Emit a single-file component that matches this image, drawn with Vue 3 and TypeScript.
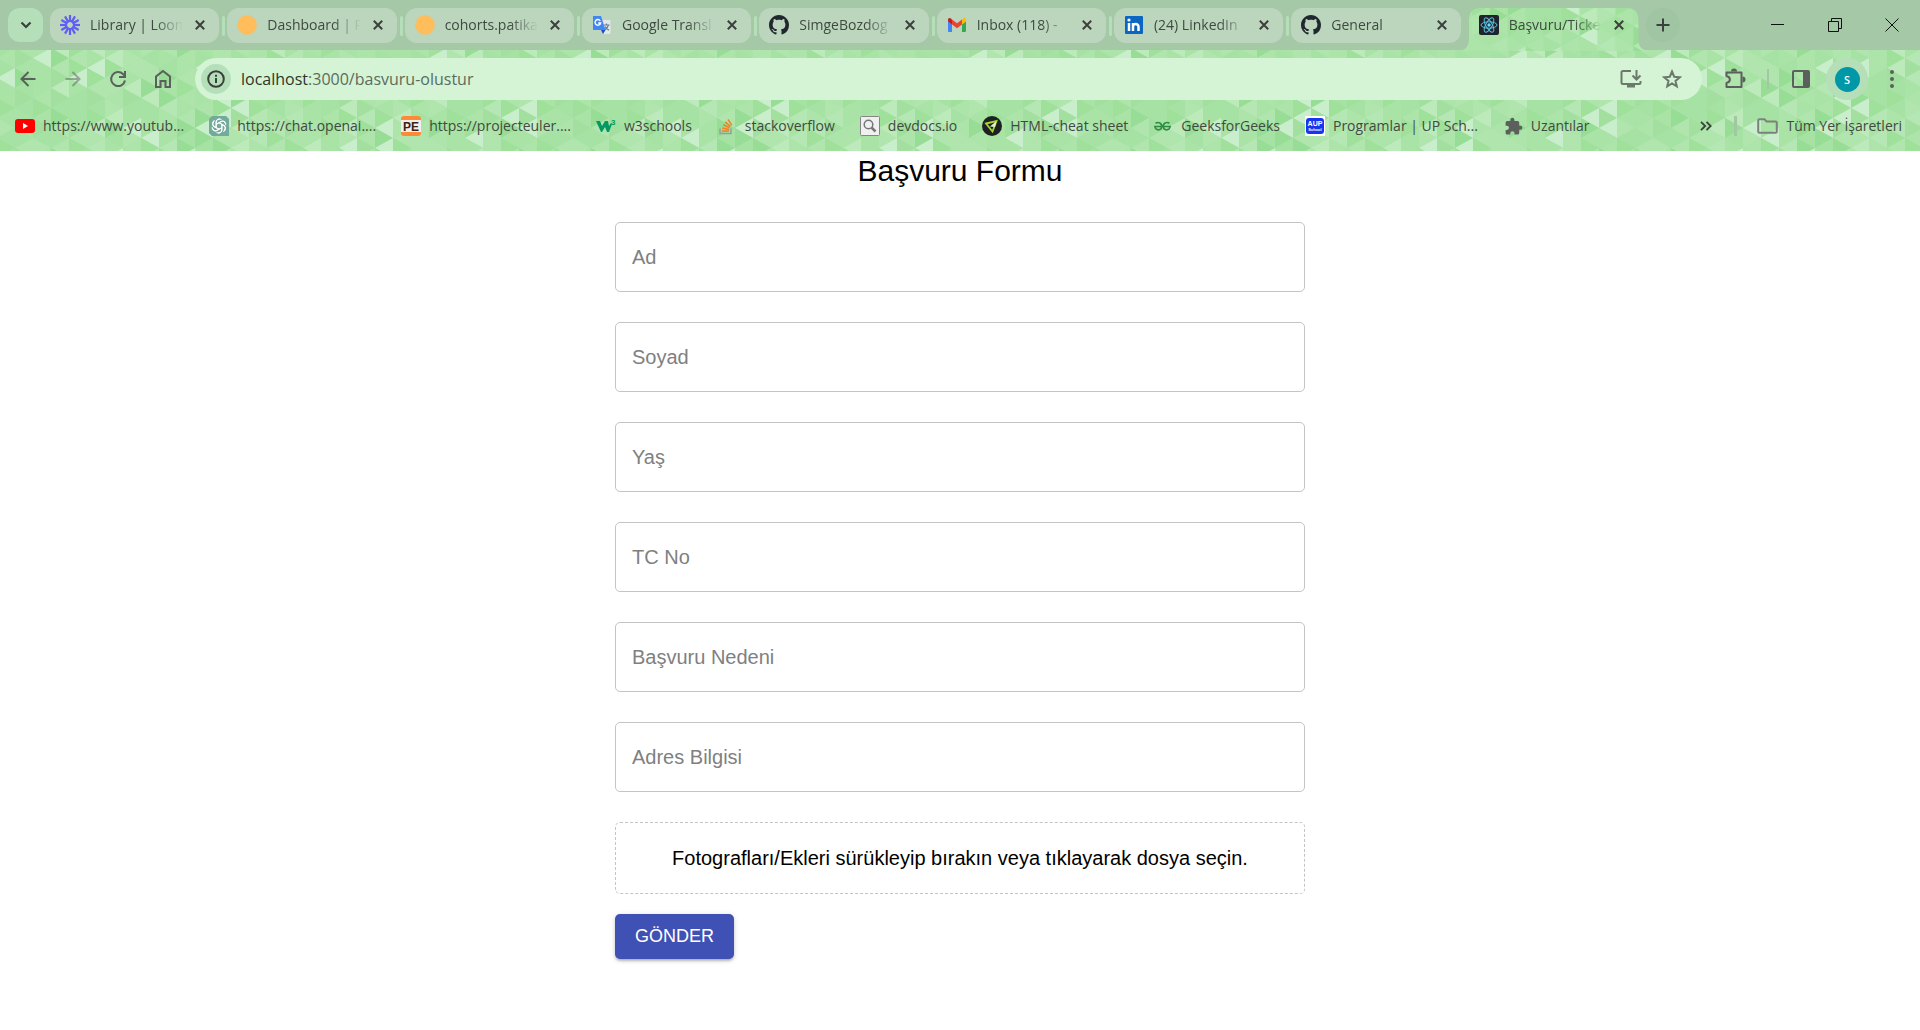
<script setup lang="ts">
import { ref } from 'vue'

interface Tab { icon: string; title: string; active?: boolean }
interface Bookmark { icon: string; title: string }
interface Field { id: string; label: string }

const tabs: Tab[] = [
  { icon: 'loom', title: 'Library | Loom' },
  { icon: 'sun', title: 'Dashboard | P' },
  { icon: 'sun', title: 'cohorts.patika' },
  { icon: 'translate', title: 'Google Transl' },
  { icon: 'github', title: 'SimgeBozdog' },
  { icon: 'gmail', title: 'Inbox (118) -' },
  { icon: 'linkedin', title: '(24) LinkedIn' },
  { icon: 'github', title: 'General' },
  { icon: 'react', title: 'Başvuru/Ticke', active: true },
]

const bookmarks: Bookmark[] = [
  { icon: 'youtube', title: 'https://www.youtub...' },
  { icon: 'openai', title: 'https://chat.openai....' },
  { icon: 'euler', title: 'https://projecteuler....' },
  { icon: 'w3', title: 'w3schools' },
  { icon: 'stack', title: 'stackoverflow' },
  { icon: 'devdocs', title: 'devdocs.io' },
  { icon: 'cheat', title: 'HTML-cheat sheet' },
  { icon: 'geeks', title: 'GeeksforGeeks' },
  { icon: 'aup', title: 'Programlar | UP Sch...' },
  { icon: 'puzzle', title: 'Uzantılar' },
]

const fields: Field[] = [
  { id: 'ad', label: 'Ad' },
  { id: 'soyad', label: 'Soyad' },
  { id: 'yas', label: 'Yaş' },
  { id: 'tc', label: 'TC No' },
  { id: 'neden', label: 'Başvuru Nedeni' },
  { id: 'adres', label: 'Adres Bilgisi' },
]

const url = ref('localhost:3000/basvuru-olustur')
const values = ref<Record<string, string>>({})

// Theme background: a repeating tile of triangles in columns, shaded by a seeded generator.
const COL = 18
const ROW = 20
const COLS = 30
const ROWS = 8
const shades = ['#98dd95', '#9fe09b', '#a3e09f', '#a6e2a3', '#a9e3a6', '#ace4aa', '#b0e5ae', '#b5e7b4', '#bceaba', '#c9eecb']
let seed = 4177
function rand(): number {
  seed = (seed * 1103515245 + 12345) % 2147483648
  return seed / 2147483648
}
const triangles: { points: string; fill: string }[] = []
for (let c = 0; c < COLS; c++) {
  const x = c * COL
  const shift = c % 2 ? ROW / 2 : 0
  for (let r = 0; r < ROWS; r++) {
    const y = r * ROW + shift
    const rightFill = shades[Math.floor(rand() * 7)]
    const leftFill = shades[3 + Math.floor(rand() * 7)]
    for (const top of [y, y - ROWS * ROW]) {
      triangles.push({ points: `${x},${top} ${x + COL},${top + 10} ${x},${top + 20}`, fill: rightFill })
      triangles.push({ points: `${x + COL},${top + 10} ${x + COL},${top + 30} ${x},${top + 20}`, fill: leftFill })
    }
  }
}
const rays = Array.from({ length: 12 }, (_, i) => i * 30)
</script>

<template>
  <div class="window">
    <header class="chrome">
      <svg class="mesh" aria-hidden="true">
        <defs>
          <pattern id="mesh" x="15" y="48" :width="COL * COLS" :height="ROW * ROWS" patternUnits="userSpaceOnUse">
            <rect :width="COL * COLS" :height="ROW * ROWS" fill="#a8e3a5" />
            <polygon v-for="(t, i) in triangles" :key="i" :points="t.points" :fill="t.fill" />
          </pattern>
        </defs>
        <rect width="100%" height="100%" fill="url(#mesh)" />
      </svg>

      <div class="strip">
        <button class="tab-search" aria-label="Sekmelerde ara">
          <svg width="12" height="8" viewBox="0 0 12 8"><path d="M1.5 1.5 6 6l4.500-4.500" class="line" stroke-width="2.200" /></svg>
        </button>
        <div class="tabs" role="tablist">
          <div v-for="(tab, i) in tabs" :key="i" class="tab" :class="{ active: tab.active }" role="tab" :aria-selected="!!tab.active">
            <svg v-if="tab.active" class="tab-shape" viewBox="0 0 194 43" preserveAspectRatio="none" aria-hidden="true">
              <path d="M0 43C8 43 12 39 12 31V12C12 4 16 0 24 0H170C178 0 182 4 182 12V31C182 39 186 43 194 43Z" fill="url(#mesh)" />
            </svg>
            <svg class="favicon" viewBox="0 0 20 20" aria-hidden="true">
              <g v-if="tab.icon === 'loom'" stroke="#625df5" stroke-width="2.200" fill="none">
                <path v-for="a in rays" :key="a" d="M10 0V7" :transform="`rotate(${a} 10 10)`" />
                <circle cx="10" cy="10" r="4" />
              </g>
              <g v-else-if="tab.icon === 'sun'">
                <circle cx="10" cy="10" r="9.400" fill="#ffbd5b" />
                <circle cx="10" cy="10" r="9.500" fill="none" stroke="#ffbd5b" stroke-width="1" stroke-dasharray="2 1.500" />
              </g>
              <g v-else-if="tab.icon === 'translate'">
                <path d="M8 5h9.500a1 1 0 0 1 1 1v12a1 1 0 0 1-1 1H12z" fill="#e4e6e8" />
                <path d="M11.500 10h6M14.500 8.500V10M16.500 10c-.8 2.500-2.500 4-4 5M13 11.500c.8 1.600 2.500 3 4 3.600" fill="none" stroke="#68808e" stroke-width="1.200" />
                <path d="M1 1h8l4.500 14H1.800A.8.8 0 0 1 1 14.200z" fill="#4285f4" />
                <path d="M9 15h4.500L11 19z" fill="#1a4fc4" />
                <path d="M8.200 5.800A2.800 2.800 0 1 0 8.600 8H6.200" fill="none" stroke="#fff" stroke-width="1.400" />
              </g>
              <path v-else-if="tab.icon === 'github'" transform="scale(1.250)" fill="#20282e" d="M8 0C3.580 0 0 3.580 0 8c0 3.540 2.290 6.530 5.470 7.590.4.070.55-.17.55-.38 0-.19-.01-.82-.01-1.490-2.010.37-2.530-.49-2.690-.94-.09-.23-.48-.94-.82-1.130-.28-.15-.68-.52-.01-.53.63-.01 1.080.58 1.230.82.72 1.210 1.870.87 2.330.66.07-.52.28-.87.51-1.070-1.780-.2-3.640-.89-3.640-3.950 0-.87.31-1.590.82-2.150-.08-.2-.36-1.020.08-2.120 0 0 .67-.21 2.200.82.64-.18 1.320-.27 2-.27s1.360.09 2 .27c1.530-1.040 2.200-.82 2.200-.82.44 1.100.16 1.920.08 2.120.51.56.82 1.270.82 2.150 0 3.070-1.870 3.750-3.650 3.950.29.25.54.73.54 1.480 0 1.070-.01 1.930-.01 2.200 0 .21.15.46.55.38A8.010 8.010 0 0 0 16 8c0-4.420-3.580-8-8-8z" />
              <g v-else-if="tab.icon === 'gmail'">
                <path d="M1 6v9.500A1.200 1.200 0 0 0 2.200 17H5V9z" fill="#4285f4" />
                <path d="M15 9v8h2.800a1.200 1.200 0 0 0 1.200-1.200V6z" fill="#34a853" />
                <path d="M15 4.500V9.500L19 6.500V4.800c0-1.900-1.800-2.300-3-1.300z" fill="#fbbc04" />
                <path d="M5 4.500 10 8.300l5-3.800v5L10 13.300 5 9.500z" fill="#ea4335" />
                <path d="M1 4.800v1.700l4 3v-5L4 3.500c-1.200-1-3-.6-3 1.300z" fill="#c5221f" />
              </g>
              <g v-else-if="tab.icon === 'linkedin'">
                <rect x="1" y="1" width="18" height="18" rx="1" fill="#0a66c2" />
                <path d="M5 8v8M9 16V8M9 16v-4.500c0-3 5.500-3.500 5.500.2V16" fill="none" stroke="#fff" stroke-width="2.500" />
                <circle cx="5" cy="5" r="1.600" fill="#fff" />
              </g>
              <g v-else>
                <rect width="20" height="20" rx="2" fill="#20232a" />
                <g fill="none" stroke="#57c4e0" stroke-width="1">
                  <ellipse cx="10" cy="10" rx="8" ry="3.200" />
                  <ellipse cx="10" cy="10" rx="8" ry="3.200" transform="rotate(60 10 10)" />
                  <ellipse cx="10" cy="10" rx="8" ry="3.200" transform="rotate(120 10 10)" />
                </g>
                <circle cx="10" cy="10" r="1.700" fill="#61dafb" />
              </g>
            </svg>
            <span class="tab-title">{{ tab.title }}</span>
            <button class="tab-close" aria-label="Kapat">
              <svg width="10" height="10" viewBox="0 0 10 10"><path d="M.8.8 9.200 9.200M9.200.8.8 9.200" class="line" stroke-width="2" /></svg>
            </button>
          </div>
        </div>
        <button class="new-tab" aria-label="Yeni sekme">
          <svg width="14" height="14" viewBox="0 0 14 14"><path d="M7 .5v13M.5 7h13" class="line" stroke-width="2" /></svg>
        </button>
        <div class="controls">
          <button aria-label="Simge durumuna küçült"><svg width="14" height="14" viewBox="0 0 14 14"><path d="M0 6.500h13" class="thin" /></svg></button>
          <button aria-label="Önceki boyut"><svg width="14" height="14" viewBox="0 0 14 14"><path d="M.5 3.500h10v10H.5zM3.500 3V.5h10v10H11" class="thin" /></svg></button>
          <button aria-label="Pencereyi kapat"><svg width="14" height="14" viewBox="0 0 14 14"><path d="M.5.5l13 13M13.500.5l-13 13" class="thin" /></svg></button>
        </div>
      </div>

      <nav class="toolbar">
        <div class="nav-buttons">
          <button aria-label="Geri"><svg width="16" height="16" viewBox="0 0 16 16"><path d="M15.500 8H2M8.500 1 1.500 8l7 7" class="line soft" /></svg></button>
          <button aria-label="İleri" class="faded"><svg width="16" height="16" viewBox="0 0 16 16"><path d="M.5 8H14M7.500 1l7 7-7 7" class="line soft" /></svg></button>
          <button aria-label="Yenile"><svg width="18" height="18" viewBox="0 0 18 18"><path d="M16 10.500A7 7 0 1 1 14.200 4.200L16 6" class="line soft" /><path d="M16 1v6h-6" class="line soft" /></svg></button>
          <button aria-label="Ana sayfa"><svg width="18" height="20" viewBox="0 0 18 20"><path d="M2 18V7.500L9 2l7 5.500V18h-4.500v-6h-5v6z" class="line soft" /></svg></button>
        </div>
        <div class="omnibox">
          <button class="site-info" aria-label="Site bilgileri">
            <svg width="18" height="18" viewBox="0 0 18 18"><circle cx="9" cy="9" r="7.800" class="line" stroke-width="2" /><path d="M9 8v5M9 4.800v2" class="line" stroke-width="2" /></svg>
          </button>
          <div class="url">
            <input v-model="url" aria-label="Adres" />
            <span class="url-view" aria-hidden="true"><b>localhost</b>:3000/basvuru-olustur</span>
          </div>
          <button aria-label="Uygulamayı yükle">
            <svg width="22" height="20" viewBox="0 0 22 20"><path d="M11 2H3Q1.500 2 1.500 3.500v10Q1.500 15 3 15h16q1.500 0 1.500-1.500V12M16.500 1v9M12.500 6.500l4 4 4-4" class="line mid" /><path d="M7 16h8v2.500H7z" fill="#6b786c" /></svg>
          </button>
          <button aria-label="Yer işareti ekle">
            <svg width="20" height="20" viewBox="0 0 20 20"><path d="M10 2.500l2.200 5.200 5.600.5-4.300 3.700 1.300 5.500-4.800-2.900-4.800 2.900 1.300-5.500L2.200 8.200l5.600-.5z" class="line mid" /></svg>
          </button>
        </div>
        <div class="actions">
          <button aria-label="Uzantılar">
            <svg width="22" height="22" viewBox="0 0 22 22"><path d="M2.500 4.500h15v14.500h-15v-4c4.500-1 4.500-6 0-7z" class="line soft" stroke-linejoin="round" /><path d="M7 3.500a3 3 0 0 1 6 0zM18.500 8.500a3 3 0 0 1 0 6z" fill="#5c605c" /></svg>
          </button>
          <span class="bar thin-bar"></span>
          <button aria-label="Yan panel">
            <svg width="18" height="18" viewBox="0 0 18 18"><rect x="1" y="1" width="16" height="16" rx="1" class="line soft" /><path d="M11 1h6v16h-6z" fill="#5c605c" /></svg>
          </button>
          <button class="profile" aria-label="Profil"><span>S</span></button>
          <button aria-label="Menü">
            <svg width="6" height="20" viewBox="0 0 6 20" fill="#5c605c"><circle cx="3" cy="3" r="2" /><circle cx="3" cy="10" r="2" /><circle cx="3" cy="17" r="2" /></svg>
          </button>
        </div>
      </nav>

      <nav class="bookmarks">
        <a v-for="b in bookmarks" :key="b.title" href="#" class="bookmark">
          <svg class="favicon" viewBox="0 0 20 20" aria-hidden="true">
            <g v-if="b.icon === 'youtube'"><rect y="3" width="20" height="14" rx="3" fill="#f00" /><path d="M8 7v6l5-3z" fill="#fff" /></g>
            <g v-else-if="b.icon === 'openai'">
              <path d="M3 0h14l3 3v17H3l-3-3V3z" fill="#74aa9c" />
              <g fill="none" stroke="#fff" stroke-width="1">
                <path v-for="a in [0, 60, 120, 180, 240, 300]" :key="a" d="M7.200 11.600V5.800A3.200 3.200 0 0 1 12.600 3.700M7.200 8.200l4.800-2.700a3 3 0 0 1 4.200 2" :transform="`rotate(${a} 10 10)`" />
              </g>
            </g>
            <g v-else-if="b.icon === 'euler'">
              <rect y="0" width="20" height="20" rx="3" fill="#ff8a35" /><rect y="4" width="20" height="12" fill="#f4efea" />
              <text x="10" y="15" text-anchor="middle" class="logo-pe">PE</text>
            </g>
            <g v-else-if="b.icon === 'w3'">
              <path d="M0 5h4l2 5 3-5h3l1 5 2-3 1 1-3 8h-2l-2-5-3 5H5z" fill="#059862" />
              <text x="15" y="9" class="logo-three">3</text>
            </g>
            <g v-else-if="b.icon === 'stack'" fill="none" stroke-width="1.500">
              <path d="M3 12.500v5h11v-5" stroke="#9a9c9f" /><path d="M5 15h7M5.300 12l6.800 1.400M6.300 8.800l6.300 3M8.200 5.900l5.300 4.500M11 3.500l3.800 5.700" stroke="#f48024" />
            </g>
            <g v-else-if="b.icon === 'devdocs'">
              <rect x=".5" y=".5" width="19" height="19" rx="1" fill="#f0f0f0" stroke="#858585" /><circle cx="8.500" cy="8.500" r="4.300" fill="none" stroke="#777" stroke-width="1.500" /><path d="M11.500 11.500l4 4" stroke="#777" stroke-width="2.500" />
            </g>
            <g v-else-if="b.icon === 'cheat'">
              <circle cx="10" cy="10" r="10" fill="#1e2122" /><path d="M4 7.500 14.500 5 10.500 15.500z" fill="none" stroke="#a5d62f" stroke-width="1.800" /><path d="M14.500 5 8 10.500l5 .5z" fill="#e4f2c4" />
            </g>
            <g v-else-if="b.icon === 'geeks'" fill="none" stroke="#2f8d46" stroke-width="1.600">
              <path d="M1 10.500h17M2.500 7.300C5.500 5.500 9 7 8.700 10.800 8.300 15 2.500 15 2 10.500M16.500 7.300c-3-1.800-6.500-.3-6.200 3.500.4 4.200 6.200 4.200 6.700-.3" />
            </g>
            <g v-else-if="b.icon === 'aup'">
              <path d="M0 0h20v20H0z" fill="#fff" /><rect x="1" y="2" width="18" height="16" rx="3" fill="#1735f0" />
              <text x="10" y="10" text-anchor="middle" class="logo-aup">AUP</text><text x="10" y="15" text-anchor="middle" class="logo-school">School</text>
            </g>
            <path v-else transform="translate(1 1) scale(.8)" fill="#5c605c" d="M20.500 11H19V7c0-1.100-.9-2-2-2h-4V3.500a2.500 2.500 0 0 0-5 0V5H4c-1.100 0-2 .9-2 2v3.800h1.500a2.700 2.700 0 0 1 0 5.400H2V20c0 1.100.9 2 2 2h3.800v-1.500a2.700 2.700 0 0 1 5.400 0V22H17c1.100 0 2-.9 2-2v-4h1.500a2.500 2.500 0 0 0 0-5z" />
          </svg>
          <span>{{ b.title }}</span>
        </a>
        <div class="bookmarks-end">
          <button aria-label="Diğer yer işaretleri"><svg width="12" height="10" viewBox="0 0 12 10"><path d="M1 .8 5.200 5 1 9.200M6.500.8 10.700 5 6.500 9.200" class="line" stroke-width="1.800" /></svg></button>
          <span class="bar thick"></span>
          <a href="#" class="bookmark">
            <svg width="21" height="16" viewBox="0 0 21 16"><path d="M1.200 2.500q0-1.300 1.300-1.300h5l2 2.300h9q1.300 0 1.300 1.300v8.700q0 1.300-1.300 1.300h-16q-1.300 0-1.300-1.300z" fill="none" stroke="#7b827b" stroke-width="2" /></svg>
            <span>Tüm Yer İşaretleri</span>
          </a>
        </div>
      </nav>
    </header>

    <main class="page">
      <h1>Başvuru Formu</h1>
      <form @submit.prevent>
        <div v-for="f in fields" :key="f.id" class="field">
          <input :id="f.id" v-model="values[f.id]" type="text" />
          <label v-show="!values[f.id]" :for="f.id">{{ f.label }}</label>
        </div>
        <label class="dropzone">
          <input type="file" multiple />
          Fotografları/Ekleri sürükleyip bırakın veya tıklayarak dosya seçin.
        </label>
        <button type="submit" class="submit">GÖNDER</button>
      </form>
    </main>
  </div>
</template>

<style>
body {
  margin: 0;
  background: #fff;
}
</style>

<style scoped>
.window {
  font-family: "Liberation Sans", Arial, sans-serif;
  color: #000;
}
button {
  display: flex;
  align-items: center;
  justify-content: center;
  padding: 0;
  border: 0;
  background: none;
  font-family: inherit;
  cursor: pointer;
}
.line {
  fill: none;
  stroke: #3b403c;
}
.soft {
  stroke: #5c605c;
  stroke-width: 2;
}
.mid {
  stroke: #6b786c;
  stroke-width: 2;
}
.thin {
  fill: none;
  stroke: #111;
  stroke-width: 1;
}
.chrome {
  position: relative;
  isolation: isolate;
  overflow: hidden;
  font-family: "Open Sans", "Noto Sans", sans-serif;
  font-size: 14px;
  color: #3f4a40;
}
.mesh {
  position: absolute;
  inset: 0;
  z-index: -1;
  width: 100%;
  height: 100%;
}
.strip {
  display: flex;
  align-items: center;
  height: 50px;
  padding-left: 8px;
  background: #a5c8a7;
}
.tab-search {
  width: 35px;
  height: 34px;
  margin-right: 7px;
  border-radius: 12px;
  background: #b5dfb9;
}
.tabs {
  display: flex;
  flex: 0 1 1588px;
  gap: 8px;
  min-width: 0;
}
.tab {
  position: relative;
  display: flex;
  flex: 1 1 0;
  align-items: center;
  min-width: 0;
  height: 35px;
  padding: 0 14px 0 10px;
  box-sizing: border-box;
  border-radius: 12px;
  background: #bcd6be;
}
.tab:not(.active):not(:nth-last-child(2))::after {
  content: "";
  position: absolute;
  right: -6px;
  top: 8px;
  width: 3px;
  height: 20px;
  border-radius: 2px;
  background: #b5dfb9;
}
.tab.active {
  background: none;
}
.tab-shape {
  position: absolute;
  z-index: -1;
  top: 0;
  left: -12px;
  width: calc(100% + 24px);
  height: 43px;
}
.strip,
.tab.active {
  z-index: 0;
}
.favicon {
  flex: none;
  width: 20px;
  height: 20px;
}
.tab-title {
  flex: 1;
  min-width: 0;
  margin: 0 8px 0 10px;
  overflow: hidden;
  white-space: nowrap;
  line-height: 20px;
  mask-image: linear-gradient(to right, #000 calc(100% - 32px), transparent calc(100% - 4px));
}
.new-tab {
  width: 34px;
  height: 34px;
  margin-left: 8px;
  border-radius: 50%;
  background: #a0c5a3;
}
.controls {
  display: flex;
  margin-left: auto;
}
.controls button {
  width: 57px;
  height: 50px;
}
.toolbar {
  display: flex;
  align-items: center;
  height: 58px;
}
.nav-buttons {
  display: flex;
  padding: 0 10px 0 5px;
}
.nav-buttons button {
  width: 45px;
  height: 42px;
}
.faded {
  opacity: 0.5;
}
.omnibox {
  display: flex;
  flex: 1;
  align-items: center;
  gap: 20px;
  height: 42px;
  padding: 0 20px 0 6px;
  box-sizing: border-box;
  border-radius: 21px;
  background: #d4f4d5;
}
.site-info {
  width: 30px;
  height: 30px;
  margin-right: -10px;
  border-radius: 50%;
  background: #b5dfb9;
}
.url {
  position: relative;
  flex: 1;
}
.url input {
  width: 100%;
  padding: 0;
  border: 0;
  outline: 0;
  background: none;
  color: transparent;
  font-family: inherit;
  font-size: 16px;
  line-height: 24px;
}
.url-view {
  position: absolute;
  inset: 0;
  font-size: 16px;
  line-height: 24px;
  color: #5c6b5e;
  pointer-events: none;
}
.url-view b {
  font-weight: 400;
  color: #2c342d;
}
.actions {
  display: flex;
  align-items: center;
  padding: 0 25px 0 22px;
  gap: 21px;
}
.bar {
  width: 2px;
  height: 20px;
  background: #a3c6a5;
}
.thin-bar {
  margin-right: 2px;
}
.bar.thick {
  width: 3px;
  margin-left: 22px;
  margin-right: 20px;
}
.profile {
  width: 42px;
  height: 42px;
  margin-left: -5px;
  border-radius: 50%;
  background: #b5dfb9;
}
.profile span {
  width: 25px;
  height: 25px;
  border-radius: 50%;
  background: #0097a7;
  color: #fff;
  font-size: 11px;
  line-height: 25px;
  font-weight: 600;
}
.bookmarks {
  display: flex;
  align-items: center;
  gap: 25px;
  height: 43px;
  padding: 0 18px 8px 15px;
  box-sizing: border-box;
}
.bookmark {
  display: flex;
  align-items: center;
  gap: 8px;
  color: inherit;
  text-decoration: none;
  white-space: nowrap;
  line-height: 20px;
}
.bookmarks-end {
  display: flex;
  align-items: center;
  margin-left: auto;
}
.logo-pe {
  font: 900 12px "Liberation Sans", sans-serif;
  fill: #3b2218;
}
.logo-three {
  font: 700 8px "Liberation Sans", sans-serif;
  fill: #059862;
}
.logo-aup {
  font: 700 7px "Liberation Sans", sans-serif;
  fill: #fff;
}
.logo-school {
  font: 700 4px "Liberation Sans", sans-serif;
  fill: #fff;
}
.page {
  max-width: 690px;
  margin: 0 auto;
  padding-bottom: 32px;
}
h1 {
  margin: 0 0 31px;
  font-size: 30px;
  font-weight: 400;
  line-height: 40px;
  text-align: center;
}
form {
  display: flex;
  flex-direction: column;
}
.field {
  position: relative;
  margin-bottom: 30px;
}
.field input {
  display: block;
  width: 100%;
  height: 70px;
  padding: 0 17px;
  box-sizing: border-box;
  border: 1px solid #c4c4c4;
  border-radius: 5px;
  background: #fff;
  font-family: inherit;
  font-size: 20px;
}
.field label {
  position: absolute;
  left: 17px;
  top: 23px;
  font-size: 20px;
  line-height: 24px;
  color: #808080;
}
.dropzone {
  padding: 24px;
  border: 1px dashed #c4c4c4;
  border-radius: 5px;
  font-size: 20px;
  line-height: 22px;
  text-align: center;
}
.dropzone input {
  position: absolute;
  width: 1px;
  height: 1px;
  opacity: 0;
}
.submit {
  align-self: flex-start;
  margin-top: 20px;
  padding: 0 20px;
  height: 45px;
  border-radius: 5px;
  background: #3f51b5;
  color: #fff;
  font-size: 18px;
  box-shadow: 0 3px 3px -2px rgba(0, 0, 0, 0.2), 0 2px 3px rgba(0, 0, 0, 0.14), 0 1px 6px rgba(0, 0, 0, 0.12);
}
</style>
